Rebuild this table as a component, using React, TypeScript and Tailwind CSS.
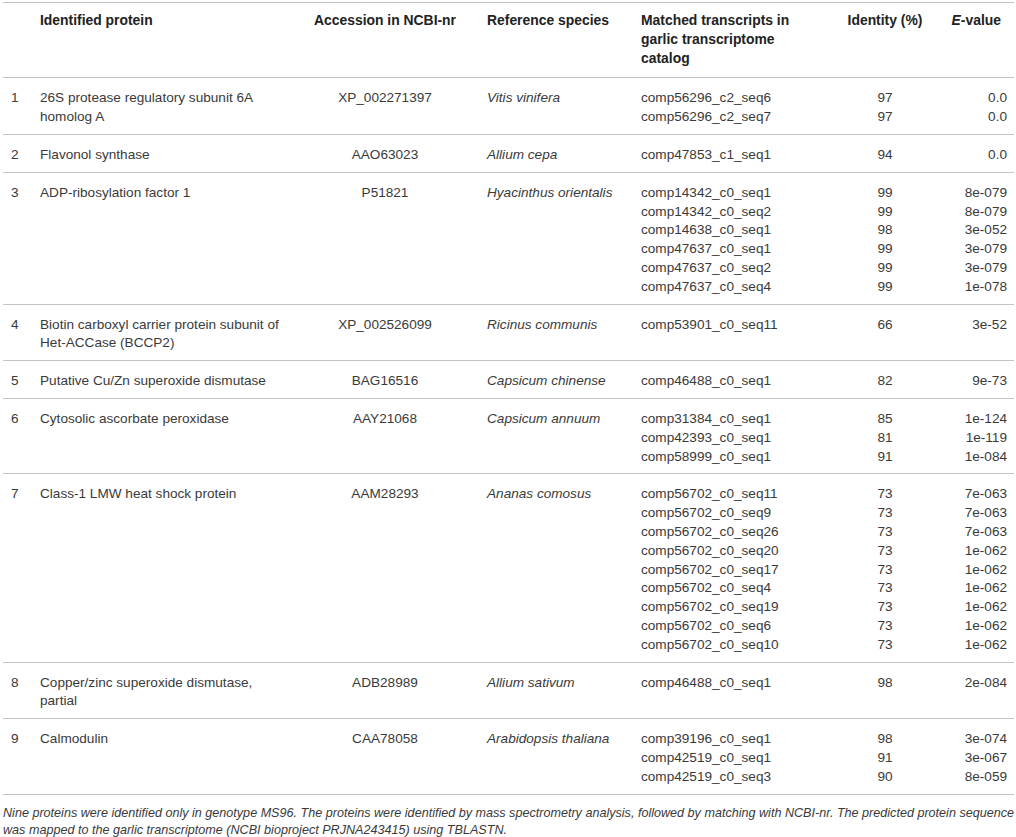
type Hit = [string, string, string];

type Row = {
  n: number;
  protein: string[];
  acc: string;
  species: string;
  hits: Hit[];
};

const seven = (seq: string, e: string): Hit => [`comp56702_c0_${seq}`, "73", e];

const ROWS: Row[] = [
  {
    n: 1,
    protein: ["26S protease regulatory subunit 6A", "homolog A"],
    acc: "XP_002271397",
    species: "Vitis vinifera",
    hits: [
      ["comp56296_c2_seq6", "97", "0.0"],
      ["comp56296_c2_seq7", "97", "0.0"],
    ],
  },
  {
    n: 2,
    protein: ["Flavonol synthase"],
    acc: "AAO63023",
    species: "Allium cepa",
    hits: [["comp47853_c1_seq1", "94", "0.0"]],
  },
  {
    n: 3,
    protein: ["ADP-ribosylation factor 1"],
    acc: "P51821",
    species: "Hyacinthus orientalis",
    hits: [
      ["comp14342_c0_seq1", "99", "8e-079"],
      ["comp14342_c0_seq2", "99", "8e-079"],
      ["comp14638_c0_seq1", "98", "3e-052"],
      ["comp47637_c0_seq1", "99", "3e-079"],
      ["comp47637_c0_seq2", "99", "3e-079"],
      ["comp47637_c0_seq4", "99", "1e-078"],
    ],
  },
  {
    n: 4,
    protein: ["Biotin carboxyl carrier protein subunit of", "Het-ACCase (BCCP2)"],
    acc: "XP_002526099",
    species: "Ricinus communis",
    hits: [["comp53901_c0_seq11", "66", "3e-52"]],
  },
  {
    n: 5,
    protein: ["Putative Cu/Zn superoxide dismutase"],
    acc: "BAG16516",
    species: "Capsicum chinense",
    hits: [["comp46488_c0_seq1", "82", "9e-73"]],
  },
  {
    n: 6,
    protein: ["Cytosolic ascorbate peroxidase"],
    acc: "AAY21068",
    species: "Capsicum annuum",
    hits: [
      ["comp31384_c0_seq1", "85", "1e-124"],
      ["comp42393_c0_seq1", "81", "1e-119"],
      ["comp58999_c0_seq1", "91", "1e-084"],
    ],
  },
  {
    n: 7,
    protein: ["Class-1 LMW heat shock protein"],
    acc: "AAM28293",
    species: "Ananas comosus",
    hits: [
      seven("seq11", "7e-063"),
      seven("seq9", "7e-063"),
      seven("seq26", "7e-063"),
      seven("seq20", "1e-062"),
      seven("seq17", "1e-062"),
      seven("seq4", "1e-062"),
      seven("seq19", "1e-062"),
      seven("seq6", "1e-062"),
      seven("seq10", "1e-062"),
    ],
  },
  {
    n: 8,
    protein: ["Copper/zinc superoxide dismutase,", "partial"],
    acc: "ADB28989",
    species: "Allium sativum",
    hits: [["comp46488_c0_seq1", "98", "2e-084"]],
  },
  {
    n: 9,
    protein: ["Calmodulin"],
    acc: "CAA78058",
    species: "Arabidopsis thaliana",
    hits: [
      ["comp39196_c0_seq1", "98", "3e-074"],
      ["comp42519_c0_seq1", "91", "3e-067"],
      ["comp42519_c0_seq3", "90", "8e-059"],
    ],
  },
];

// shared column template so header and body line up
const COLS = "grid grid-cols-[37px_260px_170px_171px_189px_110px_74px]";

function Lines({ items }: { items: string[] }) {
  return (
    <>
      {items.map((t, i) => (
        <div key={i} className="whitespace-nowrap">
          {t}
        </div>
      ))}
    </>
  );
}

export default function App() {
  return (
    <div
      className="min-h-screen bg-white pt-[2px] px-[3px]"
      style={{ fontFamily: '"Liberation Sans", Arial, sans-serif' }}
    >
      <div className="w-[1011px]">
        {/* header */}
        <div
          className={`${COLS} border-t border-[#c4c4c4] pt-[8px] pb-[10px] text-[13.9px] leading-[18.8px] font-bold text-[#222]`}
        >
          <div />
          <div>Identified protein</div>
          <div className="text-center">Accession in NCBI-nr</div>
          <div className="pl-[17px]">Reference species</div>
          <div>
            <Lines items={["Matched transcripts in", "garlic transcriptome", "catalog"]} />
          </div>
          <div className="text-center">Identity (%)</div>
          <div className="text-right pr-[13px]">
            <span className="italic">E</span>-value
          </div>
        </div>

        {/* body rows */}
        {ROWS.map((r) => (
          <div
            key={r.n}
            className={`${COLS} border-t border-[#c4c4c4] pt-[11px] pb-[7px] text-[13.6px] leading-[18.8px] text-[#3a3a3a]`}
          >
            <div className="pl-[8px]">{r.n}</div>
            <div>
              <Lines items={r.protein} />
            </div>
            <div className="text-center">{r.acc}</div>
            <div className="pl-[17px] italic">{r.species}</div>
            <div>
              <Lines items={r.hits.map((h) => h[0])} />
            </div>
            <div className="text-center">
              <Lines items={r.hits.map((h) => h[1])} />
            </div>
            <div className="text-right pr-[7px]">
              <Lines items={r.hits.map((h) => h[2])} />
            </div>
          </div>
        ))}

        {/* footnote */}
        <div className="border-t border-[#c4c4c4] pt-[10px] text-[12.6px] leading-[17px] italic text-[#3a3a3a]">
          <div className="whitespace-nowrap">
            Nine proteins were identified only in genotype MS96. The proteins were identified by mass
            spectrometry analysis, followed by matching with NCBI-nr. The predicted protein sequence
          </div>
          <div className="whitespace-nowrap">
            was mapped to the garlic transcriptome (NCBI bioproject PRJNA243415) using TBLASTN.
          </div>
        </div>
      </div>
    </div>
  );
}
